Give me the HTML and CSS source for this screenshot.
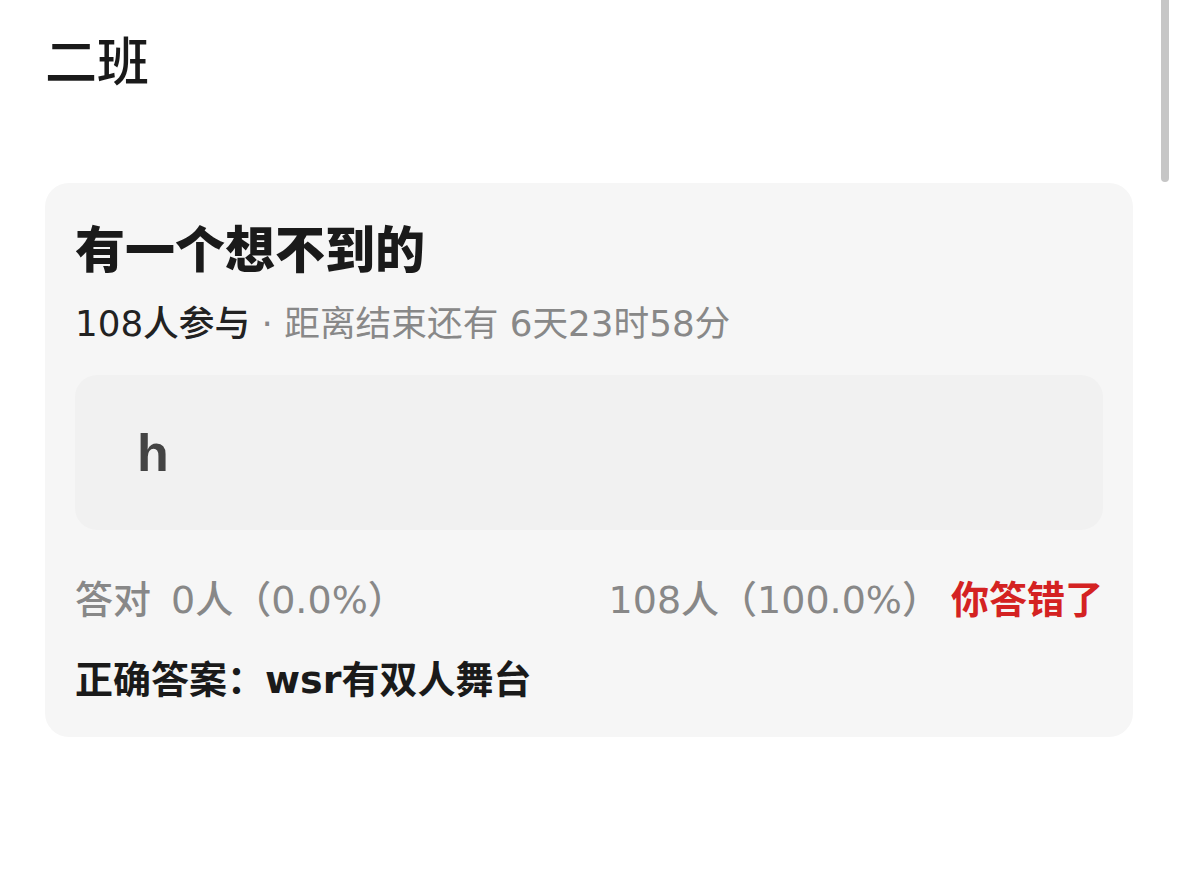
FILE: index.html
```html
<!DOCTYPE html>
<html lang="zh-CN">
<head>
<meta charset="utf-8">
<title>二班</title>
<link rel="stylesheet" href="styles.css">
</head>
<body>
<div class="page">
  <h1 class="class-name">二班</h1>
  <section class="quiz-card">
    <h2 class="quiz-title">有一个想不到的</h2>
    <p class="quiz-meta"><span class="meta-count">108人参与</span><span class="meta-rest"> · 距离结束还有 6天23时58分</span></p>
    <div class="answer-box"><span class="answer-text">h</span></div>
    <div class="stats">
      <div class="stats-left"><span class="stats-label">答对</span><span>0人（0.0%）</span></div>
      <div class="stats-right"><span>108人（100.0%）</span><span class="wrong">你答错了</span></div>
    </div>
    <p class="correct">正确答案：wsr有双人舞台</p>
  </section>
</div>
<div class="scrollbar"></div>
</body>
</html>
```

FILE: styles.css
```css
html, body {
  margin: 0;
  padding: 0;
  background: #ffffff;
}
body {
  font-family: "DejaVu Sans", "Noto Sans CJK SC", sans-serif;
  color: #1a1a1a;
}
.page {
  padding: 29px 46px 0 45px;
}
.class-name {
  margin: 0 0 94px 0;
  font-family: "Noto Sans CJK SC", sans-serif;
  font-size: 52px;
  line-height: 60px;
  font-weight: 500;
  color: #1a1a1a;
}
.quiz-card {
  background: #f6f6f6;
  border-radius: 24px;
  padding: 33px 30px 32px 30px;
}
.quiz-title {
  margin: 0 0 23px 0;
  font-family: "Noto Sans CJK SC", sans-serif;
  font-size: 50px;
  line-height: 60px;
  font-weight: 900;
  color: #1a1a1a;
}
.quiz-meta {
  margin: 0 0 27px 0;
  font-size: 35.7px;
  line-height: 49px;
}
.meta-count {
  color: #222222;
  font-weight: 500;
}
.meta-rest {
  color: #888888;
}
.answer-box {
  height: 155px;
  background: #f1f1f1;
  border-radius: 22px;
  display: flex;
  align-items: center;
  padding-left: 62px;
}
.answer-text {
  font-family: "Liberation Sans", sans-serif;
  font-size: 52px;
  font-weight: 700;
  color: #444444;
}
.stats {
  margin-top: 45px;
  display: flex;
  justify-content: space-between;
  font-size: 38px;
  line-height: 50px;
  color: #888888;
  font-weight: 500;
}
.stats-label {
  margin-right: 20px;
}
.stats-right {
  display: flex;
  gap: 11px;
}
.wrong {
  color: #d42222;
  font-weight: 700;
}
.correct {
  margin: 30px 0 0 0;
  font-size: 38px;
  line-height: 50px;
  font-weight: 600;
  color: #1a1a1a;
}
.scrollbar {
  position: fixed;
  top: 0;
  right: 10px;
  width: 8px;
  height: 182px;
  border-radius: 0 0 4px 4px;
  background: #c6c6c6;
}
```
